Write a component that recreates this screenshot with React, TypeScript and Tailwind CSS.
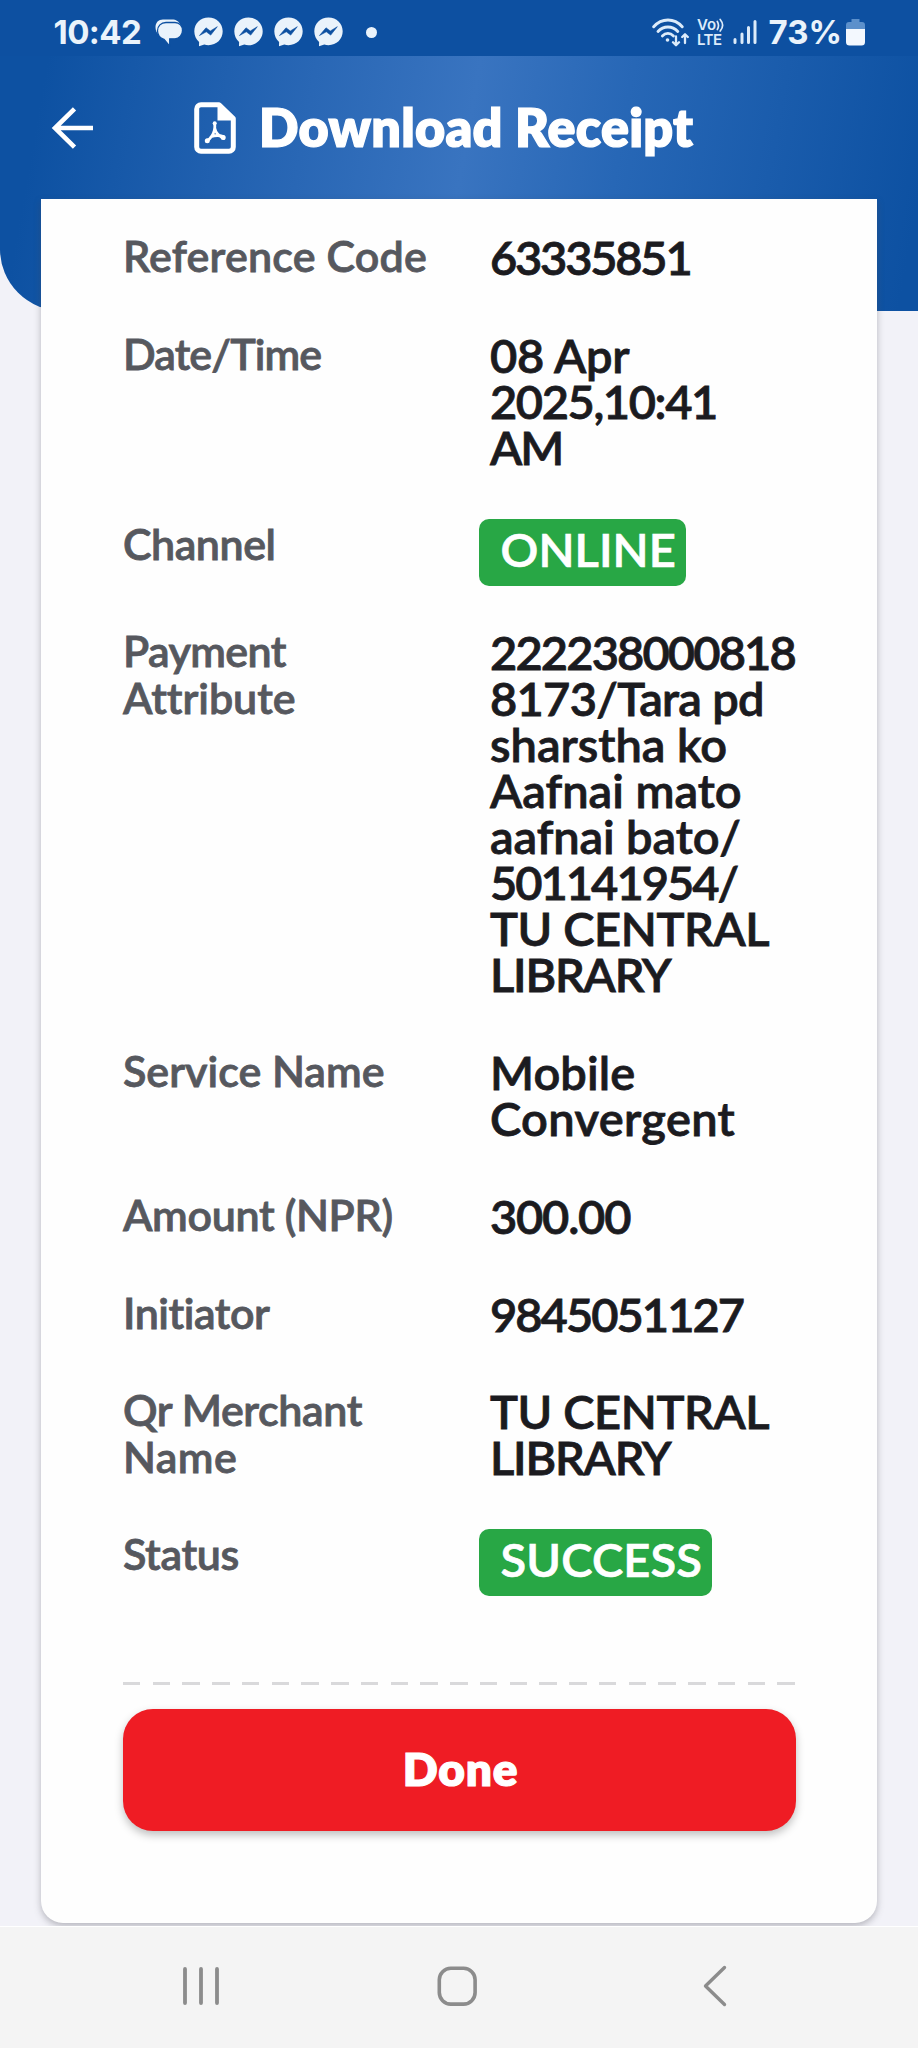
type Line = {
  text: string;
  tracking: string;
}

type Row = {
  label: Line[];
  value: Line[];
  badge?: string;
}

const rows: Row[] = [
  {
    label: [{ text: 'Reference Code', tracking: 'tracking-[0.18px]' }],
    value: [{ text: '63335851', tracking: 'tracking-[-2.2px]' }]
  },
  {
    label: [{ text: 'Date/Time', tracking: 'tracking-[-0.9px]' }],
    value: [
      { text: '08 Apr', tracking: 'tracking-[-0.2px]' },
      { text: '2025,10:41', tracking: 'tracking-[-1.4px]' },
      { text: 'AM', tracking: 'tracking-[-2px]' }
    ]
  },
  {
    label: [{ text: 'Channel', tracking: 'tracking-[-0.48px]' }],
    value: [{ text: 'ONLINE', tracking: 'tracking-[0.1px]' }],
    badge: 'w-[207px]'
  },
  {
    label: [
      { text: 'Payment', tracking: 'tracking-[-0.6px]' },
      { text: 'Attribute', tracking: 'tracking-[-0.05px]' }
    ],
    value: [
      { text: '222238000818', tracking: 'tracking-[-1.85px]' },
      { text: '8173/Tara pd', tracking: 'tracking-[-0.7px]' },
      { text: 'sharstha ko', tracking: 'tracking-normal' },
      { text: 'Aafnai mato', tracking: 'tracking-normal' },
      { text: 'aafnai bato/', tracking: 'tracking-[-0.1px]' },
      { text: '501141954/', tracking: 'tracking-[-1.98px]' },
      { text: 'TU CENTRAL', tracking: 'tracking-[-0.4px]' },
      { text: 'LIBRARY', tracking: 'tracking-[-1.2px]' }
    ]
  },
  {
    label: [{ text: 'Service Name', tracking: 'tracking-normal' }],
    value: [
      { text: 'Mobile', tracking: 'tracking-[0.1px]' },
      { text: 'Convergent', tracking: 'tracking-[0.35px]' }
    ]
  },
  {
    label: [{ text: 'Amount (NPR)', tracking: 'tracking-[-0.35px]' }],
    value: [{ text: '300.00', tracking: 'tracking-[-1.2px]' }]
  },
  {
    label: [{ text: 'Initiator', tracking: 'tracking-[-0.45px]' }],
    value: [{ text: '9845051127', tracking: 'tracking-[-1.95px]' }]
  },
  {
    label: [
      { text: 'Qr Merchant', tracking: 'tracking-[-0.4px]' },
      { text: 'Name', tracking: 'tracking-[0.4px]' }
    ],
    value: [
      { text: 'TU CENTRAL', tracking: 'tracking-[-0.4px]' },
      { text: 'LIBRARY', tracking: 'tracking-[-1.2px]' }
    ]
  },
  {
    label: [{ text: 'Status', tracking: 'tracking-[-0.37px]' }],
    value: [{ text: 'SUCCESS', tracking: 'tracking-[0.15px]' }],
    badge: 'w-[233px]'
  }
];

const ChatIcon = () => (
  <svg width="28" height="29" viewBox="0 0 28 29">
    <path d="M8 1.500h9c4 0 7 2 8 5L4 17C1.500 15 .5 12 .5 9 .5 4.500 3.500 1.500 8 1.500z" fill="#eaf3fb" />
    <path
      d="M11 4.500h9c4.600 0 7.500 3.500 7.500 8s-3 8-7.500 8.300h-5.300v7.400L9 21.300c-4-1.300-6.500-4.600-6.500-8.500 0-4.800 3.500-8.300 8.500-8.300z"
      fill="#eaf3fb" stroke="#0d50a1" strokeWidth="1.300" />
  </svg>
)

const MessengerIcon = () => (
  <svg width="29" height="30" viewBox="0 0 29 30">
    <path
      d="M14.500.5C22.500.5 28.700 6.500 28.700 14.300S22.500 28.200 14.500 28.200c-1.500 0-2.900-.2-4.200-.6L5 29.200l.1-4.300C2 22.300.3 18.600.3 14.300.3 6.500 6.500.5 14.500.5z"
      fill="#eaf3fb" />
    <path d="M5.500 18.500 12 10.800l4.300 3.200 7-4.300-6.600 8.400-4.400-3.300z" fill="#0d50a1" stroke="#0d50a1" strokeWidth=".6" strokeLinejoin="round" />
  </svg>
)

const WifiIcon = () => (
  <svg width="37" height="29" viewBox="0 0 37 29" fill="none" stroke="#dcebfa" strokeLinecap="round">
    <path d="M1.700 8.800c8-9 20.500-9 28.500 0" strokeWidth="2.900" />
    <path d="M6 13.500c5.500-6 14.300-6 19.800 0" strokeWidth="2.900" />
    <path d="M10.300 18c3.200-3.400 8-3.400 11.200 0" strokeWidth="2.700" />
    <circle cx="15.500" cy="22" r="1.800" fill="#dcebfa" stroke="none" />
    <path d="M24 18.500v8.500M21 24.300l3 3 3-3M33 25v-8.500M30.200 19l2.800-2.800L35.800 19" strokeWidth="2.300" strokeLinejoin="round" />
  </svg>
)

const VolteIcon = () => (
  <svg width="27" height="32" viewBox="0 0 27 32" fill="#dcebfa" fontFamily="Inter, sans-serif" fontWeight="600">
    <text x="0" y="14" fontSize="15">Vo</text>
    <text x="0" y="28.500" fontSize="15" textLength="25" lengthAdjust="spacing">LTE</text>
    <path d="M20.300 5.500c1.500 2.500 1.500 5.500 0 8M23.200 3.500c3 3.600 3 8 0 11.500" fill="none" stroke="#dcebfa" strokeWidth="1.700" strokeLinecap="round" />
  </svg>
)

const SignalIcon = () => (
  <svg width="24" height="26" viewBox="0 0 24 26" stroke="#dcebfa" strokeWidth="3" strokeLinecap="round">
    <path d="M2 20.500v3M9 15v8.500M15.500 8.500v15M22 2.500v21" />
  </svg>
)

const BatteryIcon = () => (
  <svg width="19" height="27" viewBox="0 0 19 27">
    <path d="M5.500 0h8v3H16a3 3 0 0 1 3 3v5H0V6a3 3 0 0 1 3-3h2.500z" fill="#5c90cb" />
    <path d="M0 10h19v13a3.500 3.500 0 0 1-3.500 3.500h-12A3.500 3.500 0 0 1 0 23z" fill="#f3f8fe" />
  </svg>
)

const PdfIcon = () => (
  <svg width="42" height="52" viewBox="0 0 42 52" fill="none" stroke="#fff">
    <path d="M25 2.700H7A4.300 4.300 0 0 0 2.700 7v38A4.300 4.300 0 0 0 7 49.300h28a4.300 4.300 0 0 0 4.300-4.300V16.500z" strokeWidth="5" strokeLinejoin="round" />
    <path d="M23.500 1.500v17H40.500V15L27 1.500z" fill="#fff" stroke="none" />
    <path d="M20.700 21.500c.6 5-.8 9.500-3 12.700-1.500 2.200-3.500 4-5 5M20.700 26c.8 4.500 4 8 9 10.500M17 34.800c3.500-1.500 8-1.700 12.500-.3" strokeWidth="2.800" strokeLinecap="round" />
    <circle cx="20.700" cy="21.200" r="2" fill="#fff" stroke="none" />
    <circle cx="13.300" cy="38.700" r="2.500" fill="#fff" stroke="none" />
    <circle cx="29.200" cy="35.500" r="2.500" fill="#fff" stroke="none" />
  </svg>
)

const StatusBar = () => (
  <div className="flex h-14 items-center bg-[#0d50a1] pt-2 pl-[53.5px] font-[Inter,sans-serif] text-[33px] leading-none font-bold text-[#eaf3fb]">
    <span className="w-[101px] tracking-[-0.58px]">10:42</span>
    <div className="flex items-center gap-[11px]">
      <ChatIcon />
      <MessengerIcon />
      <MessengerIcon />
      <MessengerIcon />
      <MessengerIcon />
      <span className="ml-3 size-[11px] rounded-full bg-[#eaf3fb]" />
    </div>
    <div className="ml-[275px] flex items-center">
      <WifiIcon />
      <span className="ml-2"><VolteIcon /></span>
      <span className="ml-[9px]"><SignalIcon /></span>
      <span className="ml-3 w-[77px]">73%</span>
      <BatteryIcon />
    </div>
  </div>
)

const Lines = ({ lines }: { lines: Line[] }) => (
  <>
    {lines.map((line, i) => (
      <span key={i} className={`block whitespace-nowrap ${line.tracking}`}>{line.text}</span>
    ))}
  </>
)

const ReceiptRow = ({ row }: { row: Row }) => (
  <div className="flex items-start">
    <dt className="w-[367px] shrink-0 pt-0.5 text-[43px] leading-[46.5px] text-[#56585e] [-webkit-text-stroke:0.8px]">
      <Lines lines={row.label} />
    </dt>
    {row.badge ? (
      <dd className={`-mb-2 -ml-[11px] h-[67px] rounded-[10px] bg-[#28a745] pl-[21.5px] text-[47px] leading-[61px] text-white [-webkit-text-stroke:0.7px] ${row.badge}`}>
        <Lines lines={row.value} />
      </dd>
    ) : (
      <dd className="pt-[3px] text-[47px] leading-[46px] text-[#1b1b1f] [-webkit-text-stroke:0.8px]">
        <Lines lines={row.value} />
      </dd>
    )}
  </div>
)

const App = () => {
  return (
    <div className="flex h-[2048px] w-[918px] flex-col overflow-hidden bg-[#f2f2f8] font-[Lato,sans-serif]">
      <StatusBar />

      <main className="flex-1 overflow-hidden">
        <header className="h-[255px] rounded-bl-[62px] bg-[linear-gradient(100deg,#0d51a2_5%,#2967b5_33%,#3974c0_50%,#2767b6_66%,#0d51a2_98%)]">
          <div className="flex h-[143px] items-center pl-[51px] text-white">
            <button>
              <svg width="43" height="42" viewBox="0 0 43 42" fill="none" stroke="#fff" strokeWidth="4.600">
                <path d="M42 21H4M23.500 1.800 4 21l19.500 19.200" />
              </svg>
            </button>
            <span className="ml-[100px]"><PdfIcon /></span>
            <h1 className="ml-[23px] pb-0.5 text-[52px] leading-[52px] font-extrabold tracking-[0.25px] [-webkit-text-stroke:1.2px]">Download Receipt</h1>
          </div>
        </header>

        <section className="relative mx-[41px] -mt-28 h-[1724px] rounded-b-[22px] bg-[#fefefe] pt-8 pr-[81px] pl-[82px] shadow-[0_3px_7px_rgba(70,70,80,0.35)]">
          <dl className="flex flex-col gap-[48.75px] font-semibold">
            {rows.map((row, i) => <ReceiptRow key={i} row={row} />)}
          </dl>

          <div className="mt-[94px] h-[2.5px] bg-[repeating-linear-gradient(90deg,#d9d9db_0_17.5px,transparent_17.5px_29.75px)]" />

          <button className="mt-6 h-[122.5px] w-full rounded-[30px] bg-[#ef1c24] pb-0.5 pl-0.5 text-[46px] leading-none font-extrabold tracking-[0.8px] text-white shadow-[0_4px_8px_rgba(0,0,0,0.25)] [-webkit-text-stroke:1.1px]">
            Done
          </button>
        </section>
      </main>

      <nav className="relative flex h-[122px] items-center border-t border-white bg-[#f4f4f4] pb-[3px] pl-[183px]">
        <svg width="36" height="40" viewBox="0 0 36 40" stroke="#8c8c8c" strokeWidth="3.800" strokeLinecap="round">
          <path d="M2 3v34M18 3v34M34 3v34" />
        </svg>
        <svg className="ml-[218px]" width="40" height="40" viewBox="0 0 40 40" fill="none" stroke="#8c8c8c" strokeWidth="3.600">
          <rect x="2.300" y="2.300" width="35.800" height="35.800" rx="11.500" />
        </svg>
        <svg className="ml-[226px]" width="24" height="42" viewBox="0 0 24 42" fill="none" stroke="#8c8c8c" strokeWidth="3.400" strokeLinecap="round" strokeLinejoin="round">
          <path d="M21.500 2.500 2.500 21l19 18.500" />
        </svg>
      </nav>
    </div>
  );
}

export default App;
